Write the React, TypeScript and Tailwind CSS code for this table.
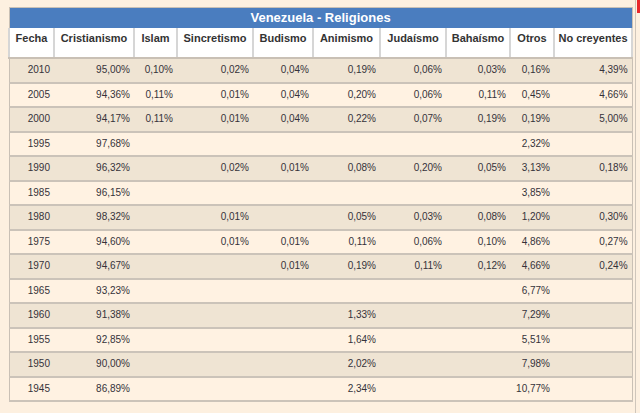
import React from 'react'

const columns = [
  { label: 'Fecha', width: 45 },
  { label: 'Cristianismo', width: 80 },
  { label: 'Islam', width: 43 },
  { label: 'Sincretismo', width: 76 },
  { label: 'Budismo', width: 60 },
  { label: 'Animismo', width: 67 },
  { label: 'Judaísmo', width: 66 },
  { label: 'Bahaísmo', width: 64 },
  { label: 'Otros', width: 44 },
  { label: 'No creyentes', width: 78 },
]

const rows: string[][] = [
  ['2010', '95,00%', '0,10%', '0,02%', '0,04%', '0,19%', '0,06%', '0,03%', '0,16%', '4,39%'],
  ['2005', '94,36%', '0,11%', '0,01%', '0,04%', '0,20%', '0,06%', '0,11%', '0,45%', '4,66%'],
  ['2000', '94,17%', '0,11%', '0,01%', '0,04%', '0,22%', '0,07%', '0,19%', '0,19%', '5,00%'],
  ['1995', '97,68%', '', '', '', '', '', '', '2,32%', ''],
  ['1990', '96,32%', '', '0,02%', '0,01%', '0,08%', '0,20%', '0,05%', '3,13%', '0,18%'],
  ['1985', '96,15%', '', '', '', '', '', '', '3,85%', ''],
  ['1980', '98,32%', '', '0,01%', '', '0,05%', '0,03%', '0,08%', '1,20%', '0,30%'],
  ['1975', '94,60%', '', '0,01%', '0,01%', '0,11%', '0,06%', '0,10%', '4,86%', '0,27%'],
  ['1970', '94,67%', '', '', '0,01%', '0,19%', '0,11%', '0,12%', '4,66%', '0,24%'],
  ['1965', '93,23%', '', '', '', '', '', '', '6,77%', ''],
  ['1960', '91,38%', '', '', '', '1,33%', '', '', '7,29%', ''],
  ['1955', '92,85%', '', '', '', '1,64%', '', '', '5,51%', ''],
  ['1950', '90,00%', '', '', '', '2,02%', '', '', '7,98%', ''],
  ['1945', '86,89%', '', '', '', '2,34%', '', '', '10,77%', ''],
]

export default function App() {
  return (
    <div
      className="flex h-[413px] w-[640px] bg-[#fdf0e0] text-[#35323a]"
      style={{ fontFamily: '"Liberation Sans", Arial, sans-serif' }}
    >
      <div className="pl-2 pt-[7px]">
        {/* Table */}
        <table className="w-[623px] table-fixed border-collapse border border-[#c9c0b5]">
          <colgroup>
            {columns.map((c) => (
              <col key={c.label} style={{ width: c.width }} />
            ))}
          </colgroup>
          <thead>
            <tr>
              <th
                colSpan={10}
                className="h-5 bg-[#4a7dbf] text-center text-[13px] font-bold leading-5 text-white"
              >
                Venezuela - Religiones
              </th>
            </tr>
            <tr>
              {columns.map((c) => (
                <th
                  key={c.label}
                  className="h-[30px] border-x-2 border-b-2 border-x-[#d6d6d6] border-b-[#c9c0b5] bg-white pt-[4px] align-top text-[11px] font-bold leading-[13px] text-[#333]"
                >
                  {c.label}
                </th>
              ))}
            </tr>
          </thead>
          <tbody>
            {rows.map((r, i) => (
              <tr
                key={r[0]}
                className={`h-[24.5px] border-b-2 border-[#cbc3b9] ${i % 2 === 0 ? 'bg-[#efe4d3]' : 'bg-[#fff2e2]'}`}
              >
                {r.map((v, j) => (
                  <td key={j} className="pr-[4px] text-right text-[10px] leading-[12px]">
                    {v}
                  </td>
                ))}
              </tr>
            ))}
          </tbody>
        </table>
      </div>
      <div className="ml-auto flex">
        <div className="w-px bg-[#cfc6bb]" />
        <div className="ml-px h-[13px] w-[3px] bg-[#e8282b]" />
      </div>
    </div>
  )
}
